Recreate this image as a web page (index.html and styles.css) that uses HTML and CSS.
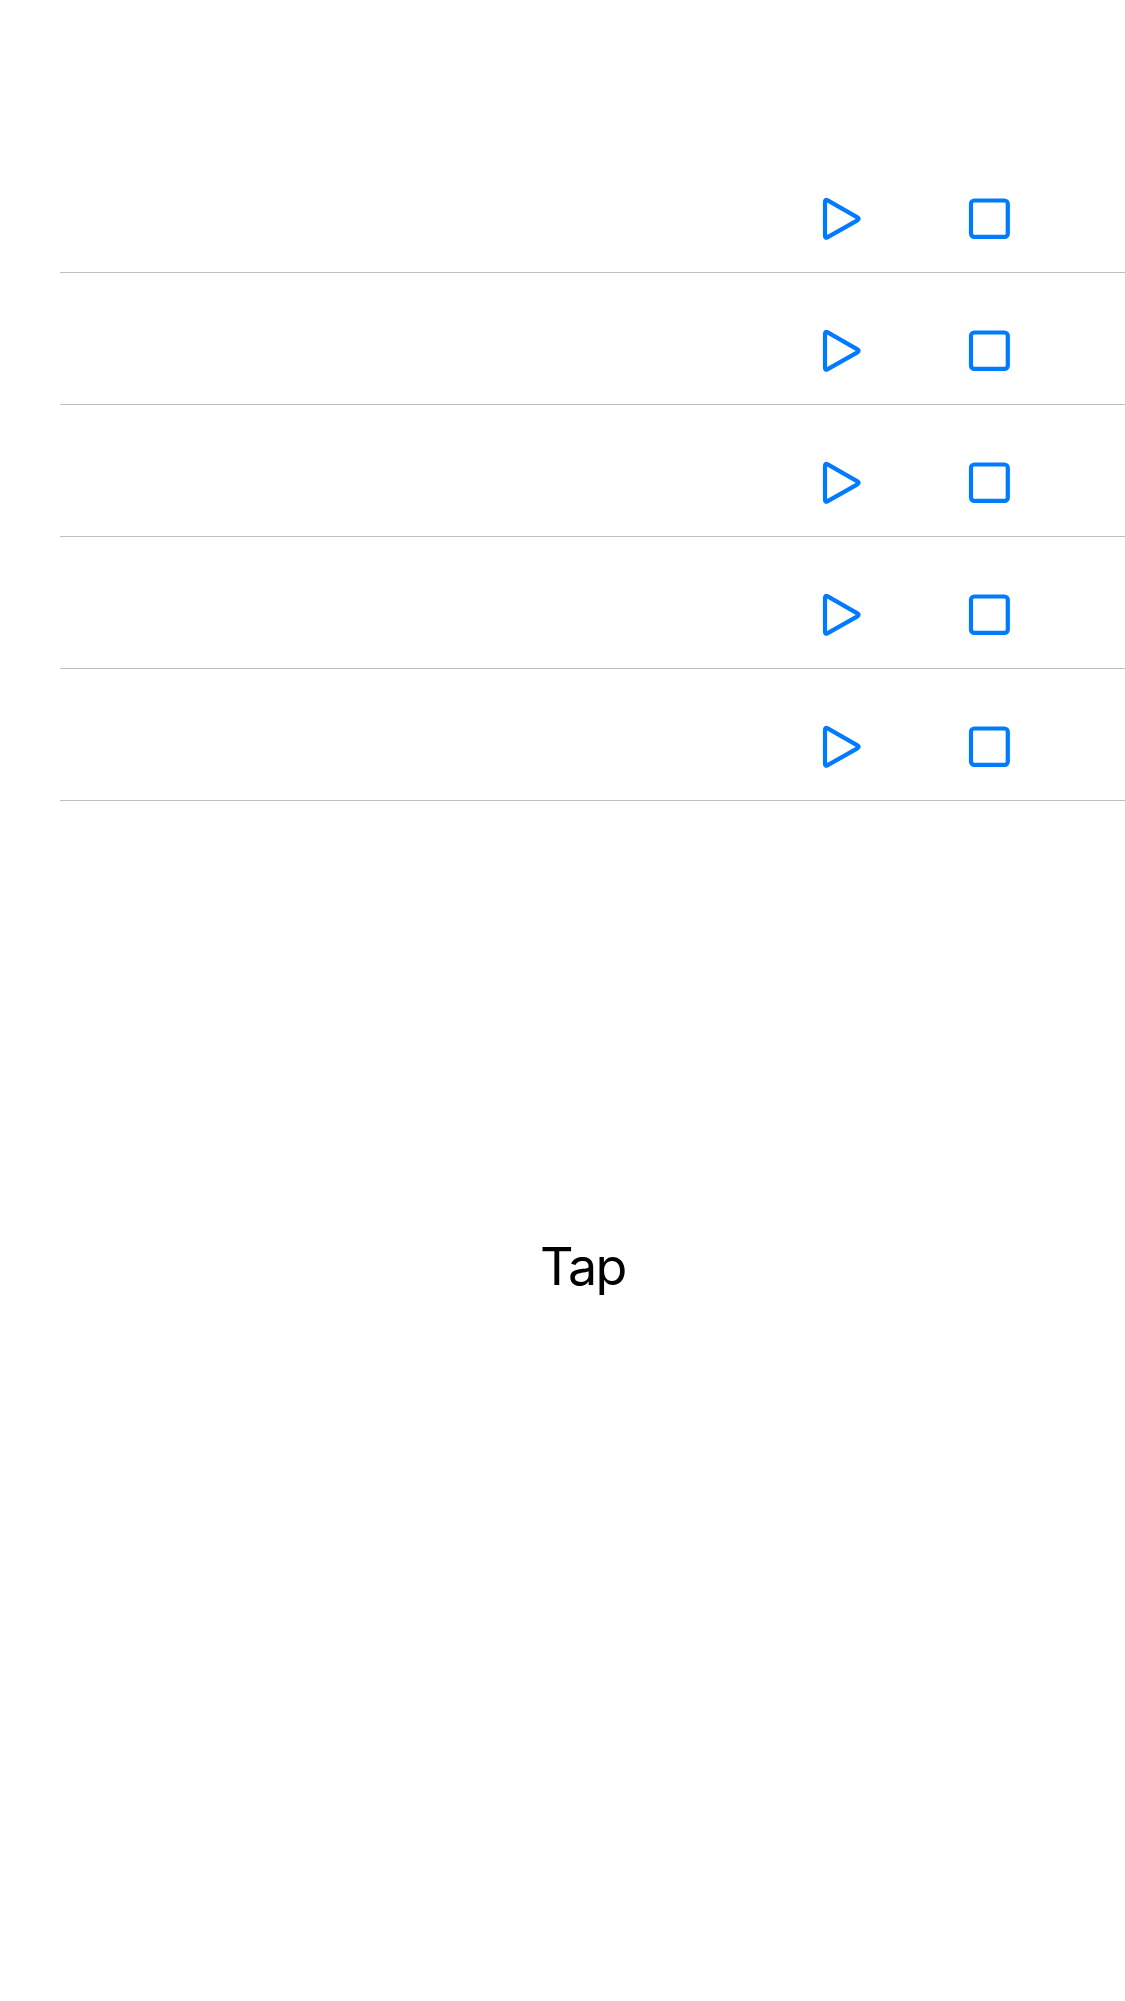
FILE: index.html
```html
<!DOCTYPE html>
<html lang="en">
<head>
<meta charset="utf-8">
<title>Tap</title>
<link rel="stylesheet" href="styles.css">
</head>
<body>
<svg class="symbols" aria-hidden="true">
  <symbol id="play" viewBox="0 0 60 60"><path d="M15 12Q15 8.9 17.7 10.4L47.4 27.3Q49.8 28.8 47.4 30.3L17.7 47.2Q15 48.8 15 45.8Z"/></symbol>
  <symbol id="stop" viewBox="0 0 60 60"><rect x="11" y="10.5" width="36.8" height="36.4" rx="3.4"/></symbol>
</svg>
<ul class="list">
  <li class="row"><svg class="icon"><use href="#play"/></svg><svg class="icon"><use href="#stop"/></svg></li>
  <li class="row"><svg class="icon"><use href="#play"/></svg><svg class="icon"><use href="#stop"/></svg></li>
  <li class="row"><svg class="icon"><use href="#play"/></svg><svg class="icon"><use href="#stop"/></svg></li>
  <li class="row"><svg class="icon"><use href="#play"/></svg><svg class="icon"><use href="#stop"/></svg></li>
  <li class="row"><svg class="icon"><use href="#play"/></svg><svg class="icon"><use href="#stop"/></svg></li>
</ul>
<p class="label">Tap</p>
</body>
</html>
```
FILE: styles.css
```css
body {
  margin: 0;
  background: #fff;
  color: #000;
  font-family: Inter, "Liberation Sans", sans-serif;
}

.symbols {
  display: block;
  width: 0;
  height: 0;
}

.list {
  margin: 0;
  padding: 141px 0 0 60px;
  list-style: none;
}

.row {
  display: flex;
  justify-content: flex-end;
  gap: 90px;
  box-sizing: border-box;
  height: 132px;
  padding: 49px 105px 0 0;
  border-bottom: 1px solid #bebec0;
}

.icon {
  width: 60px;
  height: 60px;
  fill: none;
  stroke: #007aff;
  stroke-width: 4.2;
  stroke-linejoin: round;
}

.label {
  margin: 434px 0 0;
  padding-left: 540px;
  font-size: 52px;
  line-height: 64px;
  letter-spacing: -1.7px;
}
```
